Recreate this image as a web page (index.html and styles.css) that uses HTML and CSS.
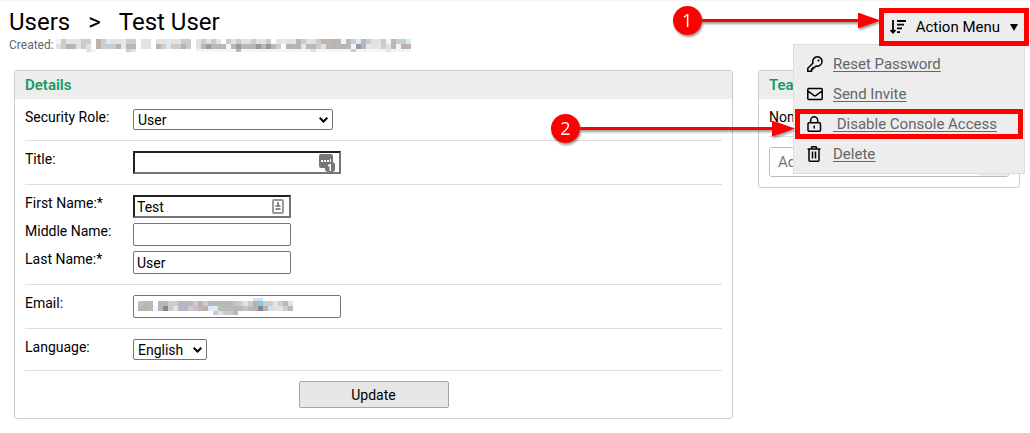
FILE: index.html
```html
<!DOCTYPE html>
<html lang="en">
<head>
<meta charset="utf-8">
<title>Users &gt; Test User</title>
<link rel="stylesheet" href="styles.css">
<script src="mosaic.js" defer></script>
</head>
<body>
<header class="page-header">
  <div class="heading">
    <h1 class="title"><span>Users</span><span>&gt;</span><span>Test User</span></h1>
    <p class="meta">Created:
      <svg class="mosaic" width="355" height="13" aria-hidden="true" id="created-mosaic"></svg>
    </p>
  </div>
  <div class="action">
    <button class="action-button" type="button" aria-expanded="true" aria-controls="menu">
      <svg width="16" height="16" viewBox="0 0 16 16" fill="none" stroke="#000" stroke-width="1.800" aria-hidden="true"><path d="M3 1v13M.5 11 3 13.700 5.500 11M7 2h9M7 5.700h7M7 9.400h5M7 13.100h3"/></svg>
      <span>Action Menu</span>
      <svg class="caret" width="8" height="8" viewBox="0 0 8 8" aria-hidden="true"><path d="M0 1h8L4 8z"/></svg>
    </button>
    <div class="callout callout-one"><span class="callout-number">1</span><span class="callout-line"></span><span class="callout-head"></span></div>
    <ul class="menu" id="menu">
      <li class="menu-item">
        <svg class="menu-icon" viewBox="0 0 16 16" aria-hidden="true"><path d="M10.500.8a4.700 4.700 0 1 1-1.500 9.200L7.500 11.500H6V13H4.500v2.200H.8v-3L6 7A4.700 4.700 0 0 1 10.500.8z"/><circle class="dot" cx="11.500" cy="4.500" r="1.100"/></svg>
        <a href="#reset">Reset Password</a>
      </li>
      <li class="menu-item">
        <svg class="menu-icon" viewBox="0 0 16 16" aria-hidden="true"><path d="M1.800 2.500h12.400q1 0 1 1v9q0 1-1 1H1.800q-1 0-1-1v-9q0-1 1-1zM1 5l5.800 4.400q1.200.8 2.400 0L15 5"/></svg>
        <a href="#invite">Send Invite</a>
      </li>
      <li class="menu-item menu-item-marked">
        <svg class="menu-icon" viewBox="0 0 16 16" aria-hidden="true"><path d="M2 6.800h10.500q1 0 1 1v6.400q0 1-1 1H2q-1 0-1-1V7.800q0-1 1-1zM3.700 6.800V4.200a3.500 3.500 0 0 1 7 0v2.600M7.200 9.500v3"/></svg>
        <a href="#disable">&nbsp;Disable Console Access</a>
        <div class="callout callout-two"><span class="callout-number">2</span><span class="callout-line"></span><span class="callout-head"></span></div>
      </li>
      <li class="menu-item">
        <svg class="menu-icon" viewBox="0 0 16 16" aria-hidden="true"><path d="M.5 3h13M4 3l1-2.200h4L10 3M2 3v11.200q0 1 1 1h8q1 0 1-1V3M5.500 5.500v7M8.500 5.500v7"/></svg>
        <a href="#delete">Delete</a>
      </li>
    </ul>
  </div>
</header>
<main class="columns">
  <section class="card">
    <h2 class="card-title">Details</h2>
    <form class="card-body">
      <div class="group">
        <label for="role">Security Role:</label>
        <div class="select select-role"><select id="role"><option>User</option></select><svg width="9" height="6" viewBox="0 0 9 6" aria-hidden="true"><path d="M.7.700 4.500 4.500 8.300.7"/></svg></div>
      </div>
      <div class="group">
        <label for="job">Title:</label>
        <div class="field wide"><input class="raised" id="job" type="text">
          <svg class="field-icon" width="17" height="18" viewBox="0 0 17 18" aria-hidden="true"><rect width="14" height="14" rx="2" fill="#777"/><path d="M2 6h2v2H2zm3 0h2v2H5zm3 0h2v2H8zm3-1h1v4h-1z" fill="#fff"/><rect x="6" y="8" width="10" height="10" rx="3" fill="#777"/><path d="M10.500 10H12v7h-1.500v-5l-1.500.5V11z" fill="#fff"/></svg></div>
      </div>
      <div class="group">
        <label for="first">First Name:*</label>
        <div class="field"><input class="raised" id="first" type="text" value="Test">
          <svg class="field-icon id-icon" width="12" height="15" viewBox="0 0 12 15" aria-hidden="true"><rect x="1" y="1" width="10" height="13" rx="1" fill="#fff" stroke="#999" stroke-width="2"/><path d="M5 3h2v2.500l1.500 1V8h-5V6.500L5 5.500zM3.500 9h5v2h-5z" fill="#888"/></svg></div>
        <label for="middle">Middle Name:</label>
        <div class="field"><input id="middle" type="text"></div>
        <label for="last">Last Name:*</label>
        <div class="field"><input id="last" type="text" value="User"></div>
      </div>
      <div class="group">
        <label for="email">Email:</label>
        <div class="field wide"><input id="email" type="text">
          <svg class="mosaic email-mosaic" width="155" height="17" aria-hidden="true" id="email-mosaic"></svg></div>
      </div>
      <div class="group">
        <label for="lang">Language:</label>
        <div class="select select-lang"><select id="lang"><option>English</option></select><svg width="9" height="6" viewBox="0 0 9 6" aria-hidden="true"><path d="M.7.700 4.500 4.500 8.300.7"/></svg></div>
      </div>
      <button class="update" type="button">Update</button>
    </form>
  </section>
  <section class="card">
    <h2 class="card-title">Teams</h2>
    <div class="card-body">
      <p class="none">None</p>
      <div class="add"><input type="text" aria-label="Add team" placeholder="Add"><button type="button" aria-label="Add"></button></div>
    </div>
  </section>
</main>
</body>
</html>
```
FILE: styles.css
```css
* { box-sizing: border-box; }
body { margin: 0; border-top: 1px solid #f5f5f5; background: #fff; color: #000; font: 14px/16px Roboto, sans-serif; }
h1, h2, p, ul { margin: 0; padding: 0; }
button, input, select { font: inherit; color: inherit; }
.page-header { display: flex; justify-content: space-between; align-items: flex-start; height: 69px; padding: 7px 1px 0 9px; }
.title { display: flex; gap: 18px; font-size: 24px; font-weight: 400; line-height: 28px; }
.meta { display: flex; align-items: center; gap: 2px; font-size: 12px; line-height: 18px; color: #666; }
.mosaic { display: block; }
.action { position: relative; z-index: 2; }
.action-button { display: flex; align-items: center; gap: 10px; height: 38px; padding: 0 6px; border: 5px solid #f00; border-radius: 0; background: #ededed; font-size: 15px; }
.menu { position: absolute; top: 36px; right: 4px; z-index: -1; width: 232px; padding: 4px 1px; border: 1px solid #ddd; background: #ededed; list-style: none; }
.menu-item { position: relative; display: flex; align-items: center; gap: 10px; height: 30px; padding: 0 12px; font-size: 15px; }
.menu-item a { color: #666; text-underline-offset: 2px; }
.menu-icon { width: 16px; height: 16px; fill: none; stroke: #000; stroke-width: 1.5; }
.menu-icon .dot { fill: #000; stroke: none; }
.menu-item-marked { outline: 5px solid #f00; outline-offset: -5px; }
.callout { position: absolute; right: 100%; display: flex; align-items: center; height: 29px; color: #fff; filter: drop-shadow(1px 2px 1px #0006); }
.callout-one { top: -2px; right: calc(100% - 2px); width: 208px; }
.callout-two { top: 5px; width: 244px; }
.callout-number { width: 29px; height: 29px; border-radius: 50%; background: #f00; font: 18px/29px "Open Sans", sans-serif; text-align: center; }
.callout-line { flex: 1; height: 3px; background: #f00; }
.callout-head { width: 23px; height: 16px; background: #f00; clip-path: polygon(0 0, 100% 50%, 0 100%); }
.columns { display: grid; grid-template-columns: minmax(0, 1fr) 262px; gap: 25px; align-items: start; padding: 0 10px 14px 14px; }
.card { overflow: hidden; border: 1px solid #ccc; border-radius: 3px; }
.card-title { padding: 0 10px; background: #ededed; color: #189a64; font-size: 15px; font-weight: 600; line-height: 28px; }
.card-body { padding: 0 10px 10px; }
.group { display: grid; grid-template-columns: 108px 1fr; row-gap: 5px; padding: 10px 0; border-bottom: 1px solid #ddd; }
.select { position: relative; height: 21px; }
.select-role { width: 200px; }
.select-lang { width: 74px; }
.select select { display: block; appearance: none; width: 100%; height: 21px; padding: 0 4px; border: 1px solid #767676; border-radius: 2px; background: #fff; }
.select svg { position: absolute; right: 5px; top: 8px; fill: none; stroke: #000; stroke-width: 2; pointer-events: none; }
.field { position: relative; width: 158px; }
.wide { width: 208px; }
.field input { display: block; width: 100%; height: 23px; padding: 0 3px; border: 1px solid #767676; border-radius: 2px; background: #fff; }
.field .raised { padding: 0 2px; border: 2px inset #767676; border-radius: 0; }
.field-icon { position: absolute; right: 5px; top: 3px; }
.id-icon { right: 7px; top: 4px; }
.email-mosaic { position: absolute; left: 5px; top: 3px; }
.update { display: block; width: 150px; height: 27px; margin: 10px auto 0; border: 1px solid #a5a5a5; border-radius: 2px; background: #e7e7e7; }
.none { height: 38px; padding: 10px 0; border-bottom: 1px solid #ddd; }
.add { display: flex; height: 30px; margin-top: 10px; border: 1px solid #bbb; border-radius: 3px; overflow: hidden; }
.add input { flex: 1; min-width: 0; padding: 0 8px; border: 0; font-size: 15px; }
.add button { width: 29px; border: 0; background: #ededed; }
```
FILE: mosaic.js
```js
// Redacted values are drawn as rows of 5px blocks, one palette letter per block.
const palette = {
  a: "#f5f5f5", b: "#e2e2e2", c: "#cccccc", d: "#b8b8b8", e: "#999999",
  w: "#eadfd6", u: "#dde9f2", t: "#bfb1a8", s: "#b0b8c2", p: "#c9bccb",
  v: "#b7b5c8", g: "#b4beb4", k: "#86868e", y: "#84c8e8", z: "#c8ae9c", l: "#c5e6f5"
};

function draw(id, rows, firstHeight) {
  const svg = document.getElementById(id);
  rows.forEach((row, r) => {
    const y = r === 0 ? 0 : firstHeight + (r - 1) * 5;
    [...row].forEach((key, column) => {
      if (!palette[key]) return;
      const block = document.createElementNS("http://www.w3.org/2000/svg", "rect");
      block.setAttribute("x", column * 5);
      block.setAttribute("y", y);
      block.setAttribute("width", 5);
      block.setAttribute("height", r === 0 ? firstHeight : 5);
      block.setAttribute("fill", palette[key]);
      svg.append(block);
    });
  });
}

draw("created-mosaic", [
  "acubbcc.tcubwucc.bb.wbubbcc.wcbcb.cbcbbcbbc.wuwudcbwctdtsadcusc" + "wbcadccu",
  "bctsbcb.tccctuds.bb.tcucctc.wsesddasesdtededc.tstuddcbdtdtsaesuwucbdatteds".slice(0, 71),
  "......wa......cb............aaaaaaaadaaaaaaaaaaaaaabaaaaaaacaaaaaabaaaa"
], 5);

draw("email-mosaic", [
  ".......................wl......",
  "pdg.dsccvvgctcsgdvdpcbczyccbcdb",
  "dtgaskcbvvcpdtuugdgvdpgtkzlbbcgcb".slice(0, 31),
  "...............cbccd..........."
], 3);
```
